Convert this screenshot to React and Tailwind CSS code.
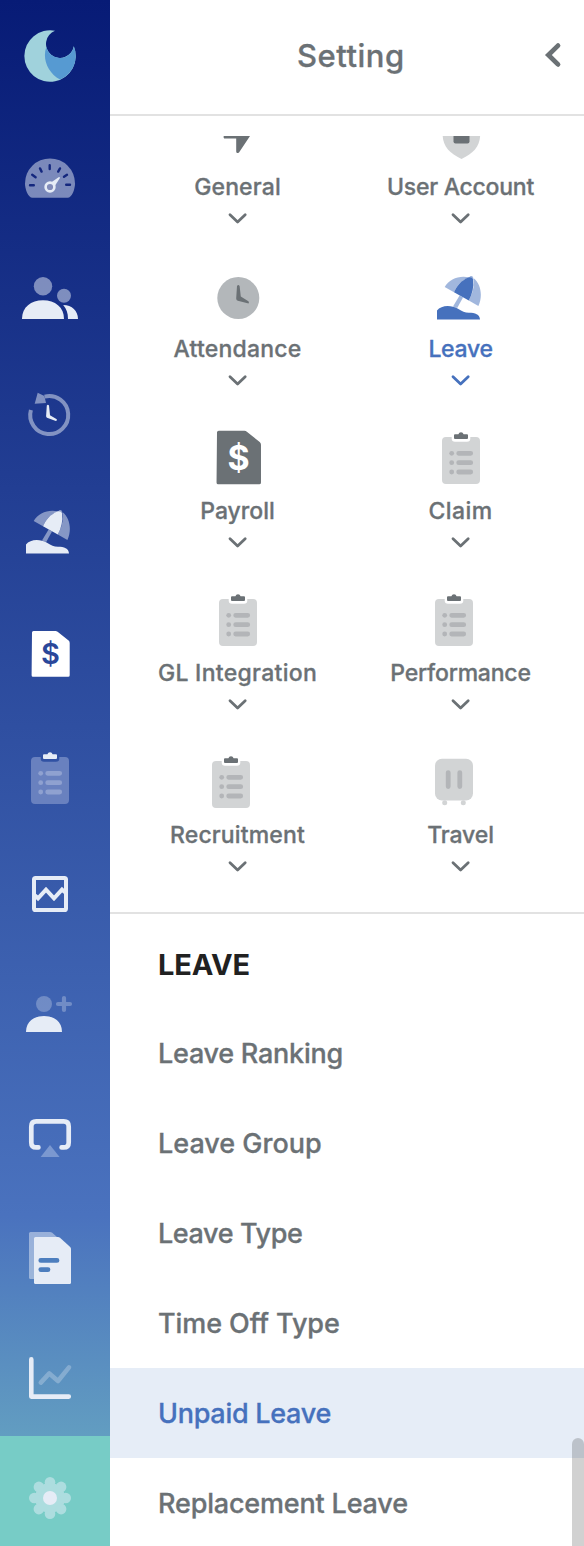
import clsx from "clsx";

function LogoIcon() {
  return (
    <svg viewBox="0 0 60 60" className="w-[60px] h-[60px]">
      <path d="M35 2.8A25.7 25.7 0 1 0 53.8 18.2A14 14 0 1 1 35 2.8Z" fill="#a0d2dc" />
      <path d="M26.3 19A14 14 0 0 0 53.8 18.2A25.7 25.7 0 0 1 40 51.6C28 45 22 31 26.3 19Z" fill="#569ad2" />
    </svg>
  );
}

function GaugeIcon() {
  return (
    <svg viewBox="0 0 60 60" className="w-[60px] h-[60px]">
      <path
        d="M12.5 51.7C8 51.7 5 43 5 37.4A25 25 0 0 1 55 37.4C55 43 52 51.7 47.5 51.7Z"
        fill="#e6ecf6"
        opacity="0.5"
      />
      <path
        d="M10 39.2h3.8M46.2 38.8h3.8M12.2 28.8l3.4 2.4M47 28.8l-3 2M20 22.4l1.6 3.2M40 22.4l-1.8 3.2M29.7 19.2v3.8"
        stroke="#14277e"
        strokeWidth="2.4"
        strokeLinecap="round"
        fill="none"
      />
      <path d="M31 36.5L38.6 31.2Q40.4 30.6 39.6 32.4L34.8 40Z" fill="#e6ecf6" />
      <circle cx="30" cy="41" r="4.4" fill="#828cba" stroke="#e6ecf6" strokeWidth="2.6" />
    </svg>
  );
}

function PeopleIcon() {
  return (
    <svg viewBox="0 0 60 60" className="w-[60px] h-[60px]" fill="#e6ecf6">
      <circle cx="23" cy="20.3" r="9.2" opacity="0.5" />
      <circle cx="44" cy="29.7" r="7" opacity="0.5" />
      <path d="M2 53C2 41 11 34.2 23 34.2S44 41 44 53Z" />
      <path d="M43.2 39C52 39 58 45 58 53H48C48 47 46.5 43 43.2 39Z" />
    </svg>
  );
}

function HistoryIcon() {
  return (
    <svg viewBox="0 0 60 60" className="w-[60px] h-[60px]" fill="#e6ecf6">
      <g opacity="0.5">
        <path d="M24.6 10.6A19 19 0 1 1 10.9 24" fill="none" stroke="#e6ecf6" strokeWidth="4" />
        <path d="M17.7 6.7L24.4 10L26 17L14.7 17.8Z" />
      </g>
      <path d="M26.8 19.4Q27.9 18 29 19.4L30 29.2L36.8 33.2V34.4L35.8 35L27 31.8Q26.1 31.3 26.1 30Z" />
    </svg>
  );
}

function UmbrellaIcon({ color = "#e6ecf6" }) {
  return (
    <svg viewBox="0 0 60 60" className="w-[60px] h-[60px]" fill={color}>
      <g opacity="0.5">
        <path d="M13.7 15C18 7 28 3.2 37.6 5.2C30 9 25.6 14 23 20.3Z" />
        <path d="M42.4 6C50 12 52 24 47.4 34L37.8 28.5C42.6 20 43.6 12 42.4 6Z" />
        <path d="M38.4 5.2C39 3.6 42 3.6 42.2 5.8L42 7L38 6Z" />
        <path d="M28.6 23.6L32 25.6L26.2 36L22 34.6Z" />
      </g>
      <path d="M37.6 5.2Q41.4 4.8 42.2 7.6C43 15 41.4 22 37.8 28.5L23 20.3C25.6 14 30 8.6 37.6 5.2Z" />
      <path d="M6 47.5V38.6C10 33 20 32.6 27 36.8C31.5 39.6 33.5 40.8 38 40.8C44 40.8 48.8 42.4 49 47.5Z" />
    </svg>
  );
}

function PayrollIcon({ color = "#ffffff", sign = "#2a479a", className = "w-[60px] h-[60px]", signClass = "font-semibold" }) {
  return (
    <svg viewBox="0 0 60 60" className={className}>
      <path
        d="M13.5 5H35.5Q36.6 5 37.6 5.8L48.6 14.6Q49.7 15.6 49.7 17V49.2Q49.7 50.8 48.2 50.8H13Q11.6 50.8 11.6 49.2L12 6.5Q12 5 13.5 5Z"
        fill={color}
      />
      <text
        x="30.4"
        y="38.2"
        textAnchor="middle"
        fill={sign}
        className={clsx("font-['Inter',sans-serif] text-[29px]", signClass)}
      >
        $
      </text>
    </svg>
  );
}

function ClipboardIcon({ body = "#6981bf", line = "#8fa1d0", clip = "#e6ecf6" }) {
  return (
    <svg viewBox="0 0 60 60" className="w-[60px] h-[60px]">
      <path
        d="M15 11H20.7V12.6Q20.7 15.8 24 15.8H36Q39.3 15.8 39.3 12.6V11H45Q49 11 49 15V54Q49 58 45 58H15Q11 58 11 54V15Q11 11 15 11Z"
        fill={body}
      />
      <path d="M24 8.3H27.4Q28 6.2 30 6.2T32.6 8.3H36Q37 8.3 37 9.3V12Q37 13 36 13H24Q23 13 23 12V9.3Q23 8.3 24 8.3Z" fill={clip} />
      <g fill={line} stroke={line}>
        <path d="M27.7 27.3h12M27.7 36.7h12M27.7 46h12" strokeWidth="4.8" strokeLinecap="round" />
        <circle cx="20.7" cy="27.3" r="2.4" stroke="none" />
        <circle cx="20.7" cy="36.7" r="2.4" stroke="none" />
        <circle cx="20.7" cy="46" r="2.4" stroke="none" />
      </g>
    </svg>
  );
}

function ActivityIcon() {
  return (
    <svg viewBox="0 0 60 60" className="w-[60px] h-[60px]" fill="none" stroke="#e6ecf6" strokeWidth="4">
      <rect x="14" y="12" width="32" height="32" rx="1.6" />
      <path d="M15 29.4L18 32.3L26 23.6L34 32.3L42 23.6L45 26.4" strokeWidth="4" />
    </svg>
  );
}

function UserPlusIcon() {
  return (
    <svg viewBox="0 0 60 60" className="w-[60px] h-[60px]" fill="#e6ecf6">
      <circle cx="24" cy="18" r="8" opacity="0.3" />
      <g opacity="0.3">
        <path d="M38 18h12M44 12v12" stroke="#e6ecf6" strokeWidth="4.2" strokeLinecap="round" />
      </g>
      <path d="M6 46C6 35.5 14 30 24 30S42 35.5 42 46Z" />
    </svg>
  );
}

function ScreenIcon() {
  return (
    <svg viewBox="0 0 60 60" className="w-[60px] h-[60px]">
      <path
        d="M18.4 41.4H16.3Q11.3 41.4 11.3 36.4V20.4Q11.3 15.4 16.3 15.4H43.7Q48.7 15.4 48.7 20.4V36.4Q48.7 41.4 43.7 41.4H41.6"
        fill="none"
        stroke="#e6ecf6"
        strokeWidth="4.7"
        strokeLinecap="round"
      />
      <path d="M30 39L39.6 51H20.6Z" fill="#7b98d0" />
    </svg>
  );
}

function DocumentIcon() {
  return (
    <svg viewBox="0 0 60 60" className="w-[60px] h-[60px]">
      <path d="M10.5 6H30Q31.2 6 32.2 6.8L37 11L20 53H10.5Q9 53 9 51.5V7.5Q9 6 10.5 6Z" fill="#e6ecf6" opacity="0.5" />
      <path d="M15.5 11H38Q39 11 40 11.8L50.2 21Q51 21.8 51 23V56.5Q51 58 49.5 58H15.5Q14 58 14 56.5V12.5Q14 11 15.5 11Z" fill="#e6ecf6" />
      <path d="M20.8 34.4H37M20.8 43.6H28" stroke="#4d7ebe" strokeWidth="4.8" strokeLinecap="round" />
    </svg>
  );
}

function ChartIcon() {
  return (
    <svg viewBox="0 0 60 60" className="w-[60px] h-[60px]" fill="none" stroke="#e6ecf6" strokeWidth="4.6" strokeLinecap="round">
      <path d="M11.3 13.4V50.6H48.8" strokeLinejoin="round" />
      <path d="M20.8 36.6L29.3 27.4L38 35L49 21.4" strokeLinejoin="round" opacity="0.3" />
    </svg>
  );
}

function GearIcon() {
  return (
    <svg viewBox="0 0 60 60" className="w-[60px] h-[60px]">
      <g fill="#addddf">
        <circle cx="30" cy="30" r="15" />
        {[0, 45, 90, 135, 180, 225, 270, 315].map((angle) => (
          <circle key={angle} cx="30" cy="14.3" r="5.3" transform={`rotate(${angle} 30 30)`} />
        ))}
      </g>
      <circle cx="30" cy="30" r="7" fill="#e6ecf6" />
    </svg>
  );
}

function LocationIcon() {
  return (
    <svg viewBox="0 0 60 60" className="w-[60px] h-[60px]" fill="#6b7175">
      <path d="M50 14L17 29Q14.6 30.4 16.2 32.4H28.2V45.6Q28.4 48 31 46.6L42 30Z" />
    </svg>
  );
}

function ShieldIcon() {
  return (
    <svg viewBox="0 0 60 60" className="w-[60px] h-[60px]">
      <path d="M30.5 4L49.2 11V28C49.2 40 43 47 30.5 53C18 47 11.6 40 11.6 28V11Z" fill="#d2d4d5" />
      <rect x="22.5" y="21" width="16" height="16.4" rx="2" fill="#6b7175" />
    </svg>
  );
}

function ClockIcon() {
  return (
    <svg viewBox="0 0 60 60" className="w-[60px] h-[60px]">
      <circle cx="30.3" cy="30" r="21" fill="#b3b7ba" />
      <path d="M29 18Q30.4 16 31.6 18L32.8 28.4L40.4 33.2Q41.4 34 40.6 35.6L29.8 32.8Q28.2 32.4 28.2 30.6Z" fill="#6b7175" />
    </svg>
  );
}

function LuggageIcon() {
  return (
    <svg viewBox="0 0 60 60" className="w-[60px] h-[60px]" fill="#d2d4d5">
      <rect x="11" y="8.7" width="38" height="41.8" rx="7" />
      <circle cx="20.7" cy="52.7" r="2.5" />
      <circle cx="39.3" cy="52.7" r="2.5" />
      <path d="M24.2 22.6v14M35.8 22.6v14" stroke="#b3b5b8" strokeWidth="4.8" strokeLinecap="round" />
    </svg>
  );
}

function GrayClipboard() {
  return <ClipboardIcon body="#d2d4d5" line="#b3b5b8" clip="#6b7175" />;
}

const navIcons = [
  GaugeIcon,
  PeopleIcon,
  HistoryIcon,
  UmbrellaIcon,
  PayrollIcon,
  ClipboardIcon,
  ActivityIcon,
  UserPlusIcon,
  ScreenIcon,
  DocumentIcon,
  ChartIcon,
];

const modules = [
  { label: "General", icon: <LocationIcon />, tracking: "tracking-[0.15px]" },
  { label: "User Account", icon: <ShieldIcon />, tracking: "tracking-[-0.25px]" },
  { label: "Attendance", icon: <ClockIcon />, tracking: "tracking-[0.2px]" },
  { label: "Leave", icon: <UmbrellaIcon color="#4671bd" />, iconClass: "pt-[7px] pl-px", tracking: "tracking-[-0.3px]", active: true },
  {
    label: "Payroll",
    icon: <PayrollIcon color="#6b7175" sign="#ffffff" className="w-[70px] h-[70px]" signClass="font-bold" />,
    tracking: "tracking-[0px]",
  },
  { label: "Claim", icon: <GrayClipboard />, iconClass: "pb-[8px] pl-px", tracking: "tracking-[0.4px]" },
  { label: "GL Integration", icon: <GrayClipboard />, iconClass: "pb-[8px]", tracking: "tracking-[0.3px]" },
  { label: "Performance", icon: <GrayClipboard />, iconClass: "pb-[8px] pr-[13px]", tracking: "tracking-[-0.2px]" },
  { label: "Recruitment", icon: <GrayClipboard />, iconClass: "pb-[8px] pr-[13px]", tracking: "tracking-[0.15px]" },
  { label: "Travel", icon: <LuggageIcon />, iconClass: "pb-[8px] pr-[13px]", tracking: "tracking-[-0.1px]" },
];

const leaveItems = [
  { label: "Leave Ranking", tracking: "tracking-[-0.25px]" },
  { label: "Leave Group", tracking: "tracking-[0px]" },
  { label: "Leave Type", tracking: "tracking-[-0.4px]" },
  { label: "Time Off Type", tracking: "tracking-[-0.08px]" },
  { label: "Unpaid Leave", tracking: "tracking-[-0.28px]", active: true },
  { label: "Replacement Leave", tracking: "tracking-[-0.18px]" },
];

function Sidebar() {
  return (
    <nav className="w-[110px] flex-shrink-0 flex flex-col bg-[linear-gradient(180deg,#071b76_0px,#4a72be_1215px,#629dc1_1436px)]">
      <div className="h-[116px] flex items-center justify-center pr-[10px]">
        <LogoIcon />
      </div>
      {navIcons.map((Icon, i) => (
        <div key={i} className="h-[120px] flex items-center justify-center pr-[10px]">
          <Icon />
        </div>
      ))}
      <div className="h-[110px] flex items-center justify-center pr-[10px] pt-[14px] bg-[#77ccc6]">
        <GearIcon />
      </div>
    </nav>
  );
}

function ModuleCell({ item }) {
  return (
    <div className={clsx("h-[162px] flex flex-col items-center", item.active ? "text-[#4671bd]" : "text-[#6b7175]")}>
      <div className={clsx("h-[70px] flex items-center justify-center", item.iconClass)}>{item.icon}</div>
      <p className={clsx("text-[23px] leading-8 font-medium [-webkit-text-stroke:0.3px] whitespace-nowrap", item.tracking)}>
        {item.label}
      </p>
      <svg viewBox="0 0 20 12" className="w-[20px] h-[12px] mt-[9px]" fill="none" stroke="currentColor">
        <path d="M2 2.8L9.6 10L17.2 2.8" strokeWidth="2.8" strokeLinecap="round" strokeLinejoin="round" />
      </svg>
    </div>
  );
}

export default function App() {
  return (
    <div className="relative flex w-[584px] h-[1546px] overflow-hidden bg-white font-['Inter',sans-serif]">
      <Sidebar />
      <main className="flex-1 min-w-0">
        <header className="h-[116px] flex items-center border-b-2 border-[#e2e2e2] pl-[187px] pr-[22px]">
          <h1 className="flex-1 -mt-[2px] text-[31px] leading-10 tracking-[0.5px] font-medium [-webkit-text-stroke:0.3px] text-[#6b7175] whitespace-nowrap">
            Setting
          </h1>
          <svg viewBox="0 0 18 28" className="w-[18px] h-[28px] -mt-[5px]" fill="none">
            <path d="M14 4.6L4.4 14L14 23.4" stroke="#6b7175" strokeWidth="4.8" strokeLinecap="round" />
          </svg>
        </header>

        <section className="h-[798px] pt-[20px] border-b-2 border-[#e2e2e2]">
          <div className="h-[776px] overflow-hidden pl-4 pr-3">
            <div className="grid grid-cols-2 -mt-[35px]">
              {modules.map((item) => (
                <ModuleCell key={item.label} item={item} />
              ))}
            </div>
          </div>
        </section>

        <section className="pt-[28px]">
          <h2 className="h-[46px] pl-[48px] text-[29px] leading-[46px] tracking-[-0.1px] font-bold text-[#212121]">LEAVE</h2>
          <ul className="pt-[20px]">
            {leaveItems.map((item) => (
              <li
                key={item.label}
                className={clsx(
                  "h-[90px] flex items-center pl-[48px] pt-[3px] text-[27px] font-medium [-webkit-text-stroke:0.3px] whitespace-nowrap",
                  item.tracking,
                  item.active ? "bg-[#e6edf7] text-[#4671bd]" : "text-[#6b7175]"
                )}
              >
                {item.label}
              </li>
            ))}
          </ul>
        </section>
      </main>

      {/* scrollbar thumb */}
      <div className="absolute right-0 top-[1438px] w-[12px] h-[160px] rounded-full bg-black/[0.18]" />
    </div>
  );
}
